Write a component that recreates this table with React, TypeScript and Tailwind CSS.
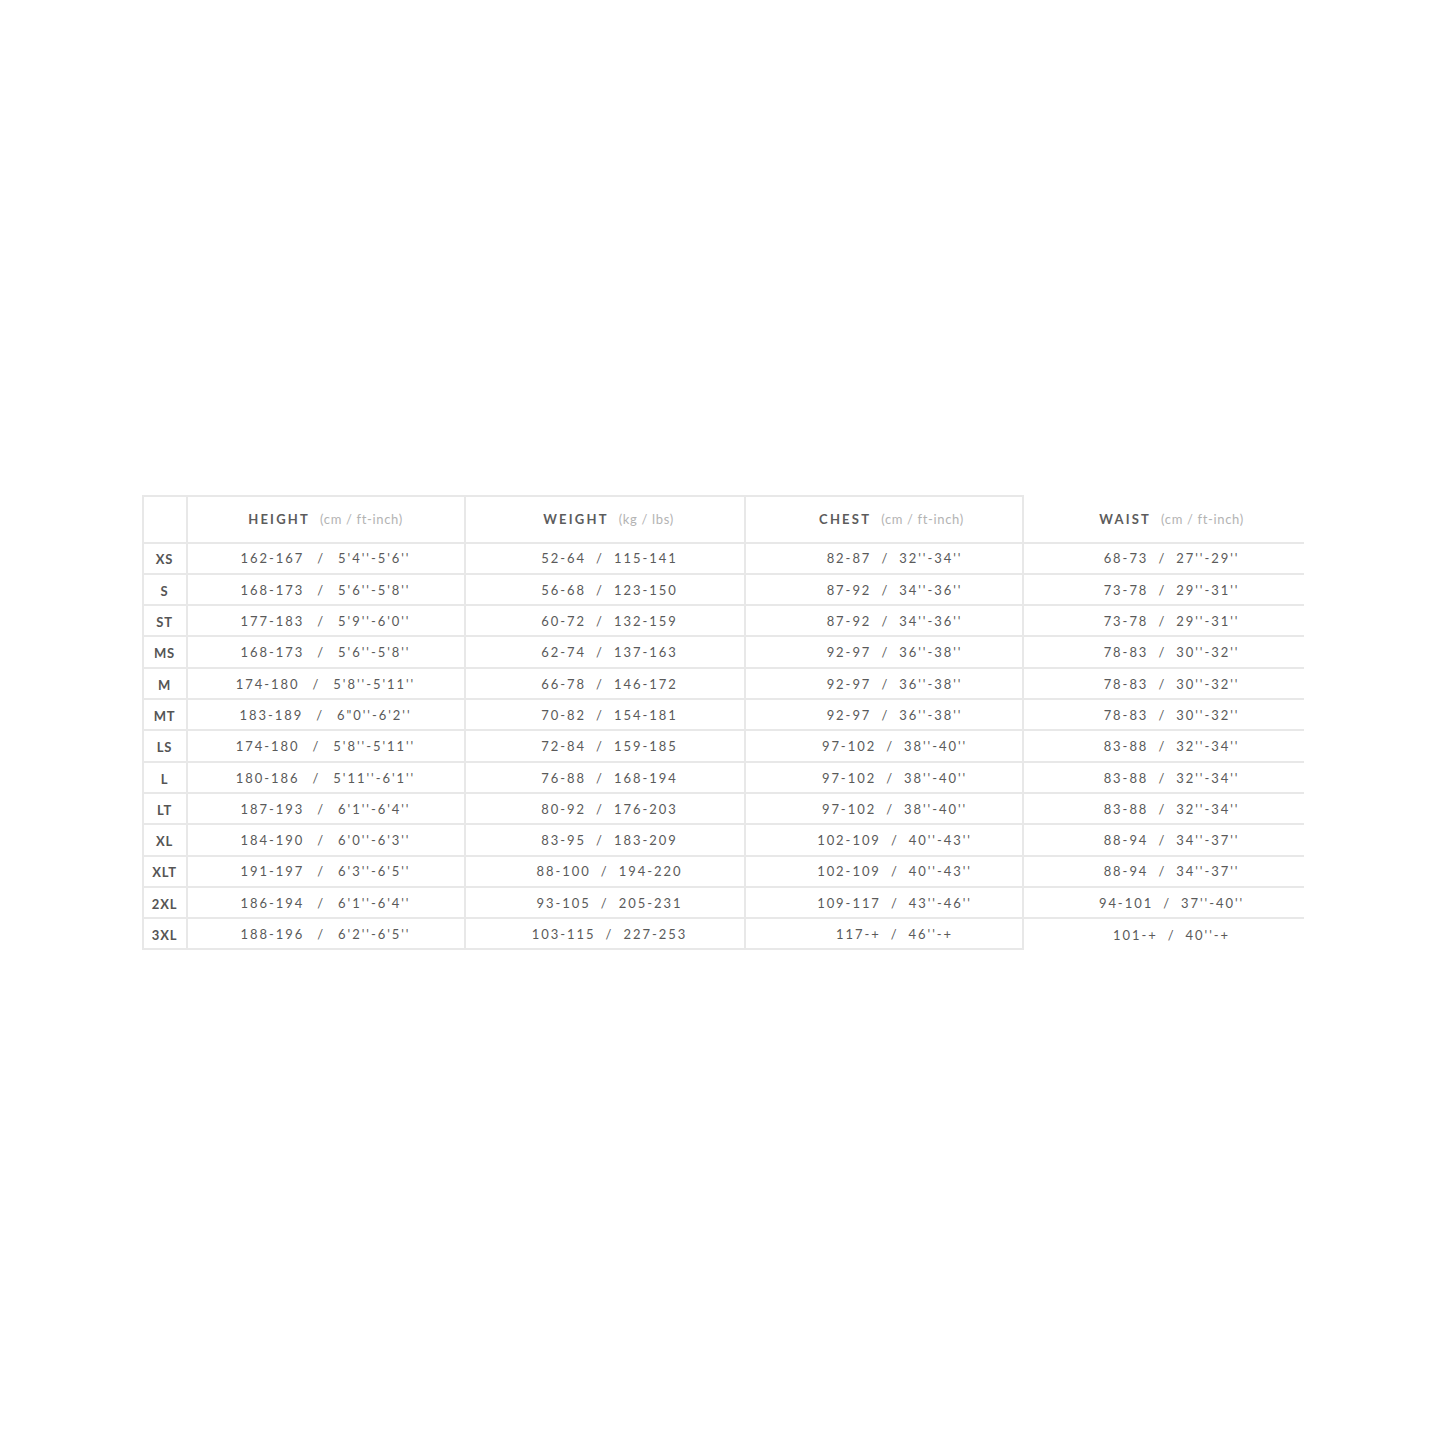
const rows: [string, string, string, string, string][] = [
  ["XS", "162-167/5'4''-5'6''", "52-64/115-141", "82-87/32''-34''", "68-73/27''-29''"],
  ["S", "168-173/5'6''-5'8''", "56-68/123-150", "87-92/34''-36''", "73-78/29''-31''"],
  ["ST", "177-183/5'9''-6'0''", "60-72/132-159", "87-92/34''-36''", "73-78/29''-31''"],
  ["MS", "168-173/5'6''-5'8''", "62-74/137-163", "92-97/36''-38''", "78-83/30''-32''"],
  ["M", "174-180/5'8''-5'11''", "66-78/146-172", "92-97/36''-38''", "78-83/30''-32''"],
  ["MT", "183-189/6\"0''-6'2''", "70-82/154-181", "92-97/36''-38''", "78-83/30''-32''"],
  ["LS", "174-180/5'8''-5'11''", "72-84/159-185", "97-102/38''-40''", "83-88/32''-34''"],
  ["L", "180-186/5'11''-6'1''", "76-88/168-194", "97-102/38''-40''", "83-88/32''-34''"],
  ["LT", "187-193/6'1''-6'4''", "80-92/176-203", "97-102/38''-40''", "83-88/32''-34''"],
  ["XL", "184-190/6'0''-6'3''", "83-95/183-209", "102-109/40''-43''", "88-94/34''-37''"],
  ["XLT", "191-197/6'3''-6'5''", "88-100/194-220", "102-109/40''-43''", "88-94/34''-37''"],
  ["2XL", "186-194/6'1''-6'4''", "93-105/205-231", "109-117/43''-46''", "94-101/37''-40''"],
  ["3XL", "188-196/6'2''-6'5''", "103-115/227-253", "117-+/46''-+", "101-+/40''-+"],
];

const headers = [
  { label: "HEIGHT", unit: "(cm / ft-inch)", pad: "pl-0" },
  { label: "WEIGHT", unit: "(kg / lbs)", pad: "pl-[8px]" },
  { label: "CHEST", unit: "(cm / ft-inch)", pad: "pl-[16px]" },
  { label: "WAIST", unit: "(cm / ft-inch)", pad: "pl-[16px]" },
];

// per-column nudges, the source chart isn't perfectly centred
const cellPad = ["pl-0", "pl-[10px]", "pl-[22px]", "pl-[16px]"];
const slashGap = ["mx-[13px]", "mx-[10px]", "mx-[10px]", "mx-[10px]"];

const Value = ({ text, gap }: { text: string; gap: string }) => {
  const [a, b] = text.split("/");
  return (
    <span className="whitespace-nowrap">
      <span>{a}</span>
      <span className={gap}>/</span>
      <span>{b}</span>
    </span>
  );
};

const App = () => {
  const line = "border-[#e8e8e8]";
  return (
    <div
      className="min-h-[1445px] w-full bg-white flex items-center justify-center"
      style={{ fontFamily: "Lato, 'Open Sans', sans-serif" }}
    >
      <div className="w-[1162px] text-[#555]">
        <div className="grid grid-cols-[44px_278px_280px_278px_282px] h-[49px]">
          <div className={`border-2 border-r-0 ${line}`} />
          {headers.map((h, i) => (
            <div
              key={h.label}
              className={`flex items-center justify-center border-b-2 border-l-2 ${line} ${
                i < 3 ? "border-t-2 pt-[2px]" : "pt-[4px]"
              } ${h.pad}`}
            >
              <span className="text-[13px] font-bold tracking-[0.17em] text-[#5c5c5c]">
                {h.label}
              </span>
              <span className="ml-[10px] text-[13px] tracking-[0.05em] text-[#b3b3b3]">
                {h.unit}
              </span>
            </div>
          ))}
        </div>
        {rows.map((r, ri) => {
          const last = ri === rows.length - 1;
          return (
            <div
              key={r[0]}
              className="grid grid-cols-[44px_278px_280px_278px_282px] h-[31.3px]"
            >
              <div
                className={`flex items-center justify-center border-l-2 border-b-2 ${line} pt-[4px] text-[13px] font-bold tracking-[0.06em] text-[#555]`}
              >
                {r[0]}
              </div>
              {r.slice(1).map((v, ci) => (
                <div
                  key={ci}
                  className={`flex items-center justify-center border-l-2 ${line} ${
                    ci === 3 && last ? "" : "border-b-2"
                  } ${cellPad[ci]} pt-[2px] text-[13px] tracking-[0.15em] text-[#5a5a5a]`}
                >
                  <Value text={v} gap={slashGap[ci]} />
                </div>
              ))}
            </div>
          );
        })}
      </div>
    </div>
  );
};

export default App;
